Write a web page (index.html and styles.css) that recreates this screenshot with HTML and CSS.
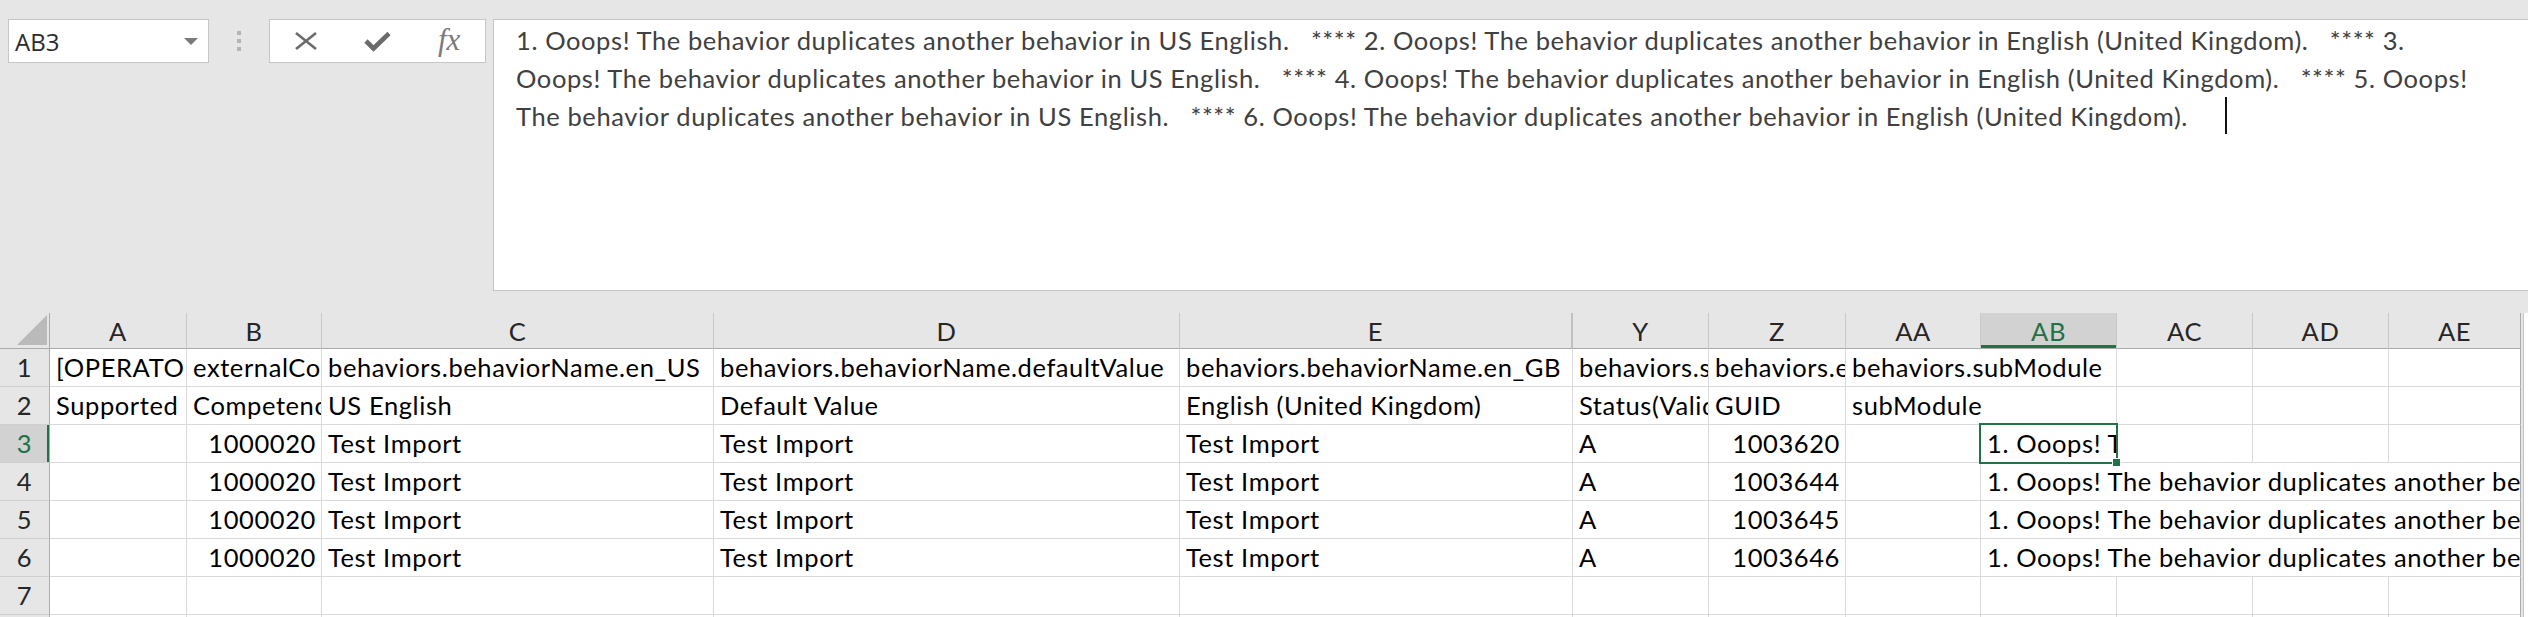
FILE: index.html
```html
<!DOCTYPE html>
<html lang="en">
<head>
  <meta charset="UTF-8">
  <title>Book1 - Excel</title>
  <link rel="stylesheet" href="styles.css">
</head>
<body>
  <div class="topbar">
    <div class="name-box">
      <span class="name-ref">AB3</span>
      <span class="name-caret"></span>
    </div>
    <div class="grip"><i></i><i></i><i></i></div>
    <div class="fx-buttons">
      <span class="fx-btn">
        <svg width="24" height="20" viewBox="0 0 24 20"><path d="M2 2 L22 18 M22 2 L2 18" stroke="#6b6b6b" stroke-width="2.6" fill="none"/></svg>
      </span>
      <span class="fx-btn">
        <svg width="27" height="21" viewBox="0 0 27 21"><path d="M2 10 L9.5 17.5 L25 2.5" stroke="#6b6b6b" stroke-width="4.6" fill="none"/></svg>
      </span>
      <span class="fx-btn"><span class="fx">fx</span></span>
    </div>
    <div class="formula">
      <div class="formula-line">1. Ooops! The behavior duplicates another behavior in US English.   **** 2. Ooops! The behavior duplicates another behavior in English (United Kingdom).   **** 3.</div>
      <div class="formula-line">Ooops! The behavior duplicates another behavior in US English.   **** 4. Ooops! The behavior duplicates another behavior in English (United Kingdom).   **** 5. Ooops!</div>
      <div class="formula-line">The behavior duplicates another behavior in US English.   **** 6. Ooops! The behavior duplicates another behavior in English (United Kingdom).   <span class="caret"></span></div>
    </div>
  </div>

  <div class="sheet-wrap">
    <div class="sheet">
      <!-- column headers -->
      <div class="corner"><svg width="30" height="30" viewBox="0 0 30 30"><polygon points="30,0 30,30 0,30" fill="#bababa"/></svg></div>
      <div class="ch">A</div>
      <div class="ch">B</div>
      <div class="ch">C</div>
      <div class="ch">D</div>
      <div class="ch hidden-before-next">E</div>
      <div class="ch">Y</div>
      <div class="ch">Z</div>
      <div class="ch">AA</div>
      <div class="ch sel">AB</div>
      <div class="ch">AC</div>
      <div class="ch">AD</div>
      <div class="ch last">AE</div>

      <!-- row 1 -->
      <div class="rh">1</div>
      <div class="c">[OPERATOR]</div>
      <div class="c">externalCode</div>
      <div class="c">behaviors.behaviorName.en_US</div>
      <div class="c">behaviors.behaviorName.defaultValue</div>
      <div class="c">behaviors.behaviorName.en_GB</div>
      <div class="c">behaviors.status</div>
      <div class="c">behaviors.externalCode</div>
      <div class="c span2">behaviors.subModule</div>
      <div class="c"></div>
      <div class="c"></div>
      <div class="c last"></div>

      <!-- row 2 -->
      <div class="rh">2</div>
      <div class="c">Supported operators</div>
      <div class="c">Competency</div>
      <div class="c">US English</div>
      <div class="c">Default Value</div>
      <div class="c">English (United Kingdom)</div>
      <div class="c">Status(Valid Values : A/I)</div>
      <div class="c">GUID</div>
      <div class="c span2">subModule</div>
      <div class="c"></div>
      <div class="c"></div>
      <div class="c last"></div>

      <!-- row 3 -->
      <div class="rh sel">3</div>
      <div class="c"></div>
      <div class="c num">1000020</div>
      <div class="c">Test Import</div>
      <div class="c">Test Import</div>
      <div class="c">Test Import</div>
      <div class="c">A</div>
      <div class="c num">1003620</div>
      <div class="c"></div>
      <div class="c active"><span class="clip">1. Ooops! The behavior duplicates another behavior in US English.</span></div>
      <div class="c"></div>
      <div class="c"></div>
      <div class="c last"></div>

      <!-- row 4 -->
      <div class="rh">4</div>
      <div class="c"></div>
      <div class="c num">1000020</div>
      <div class="c">Test Import</div>
      <div class="c">Test Import</div>
      <div class="c">Test Import</div>
      <div class="c">A</div>
      <div class="c num">1003644</div>
      <div class="c"></div>
      <div class="c span4 last">1. Ooops! The behavior duplicates another behavior in US English.   **** 2. Ooops! The behavior duplicates another behavior in English (United Kingdom).</div>

      <!-- row 5 -->
      <div class="rh">5</div>
      <div class="c"></div>
      <div class="c num">1000020</div>
      <div class="c">Test Import</div>
      <div class="c">Test Import</div>
      <div class="c">Test Import</div>
      <div class="c">A</div>
      <div class="c num">1003645</div>
      <div class="c"></div>
      <div class="c span4 last">1. Ooops! The behavior duplicates another behavior in US English.   **** 2. Ooops! The behavior duplicates another behavior in English (United Kingdom).</div>

      <!-- row 6 -->
      <div class="rh">6</div>
      <div class="c"></div>
      <div class="c num">1000020</div>
      <div class="c">Test Import</div>
      <div class="c">Test Import</div>
      <div class="c">Test Import</div>
      <div class="c">A</div>
      <div class="c num">1003646</div>
      <div class="c"></div>
      <div class="c span4 last">1. Ooops! The behavior duplicates another behavior in US English.   **** 2. Ooops! The behavior duplicates another behavior in English (United Kingdom).</div>

      <!-- row 7 -->
      <div class="rh">7</div>
      <div class="c"></div><div class="c"></div><div class="c"></div><div class="c"></div>
      <div class="c"></div><div class="c"></div><div class="c"></div><div class="c"></div>
      <div class="c"></div><div class="c"></div><div class="c"></div><div class="c last"></div>

      <!-- row 8 -->
      <div class="rh">8</div>
      <div class="c"></div><div class="c"></div><div class="c"></div><div class="c"></div>
      <div class="c"></div><div class="c"></div><div class="c"></div><div class="c"></div>
      <div class="c"></div><div class="c"></div><div class="c"></div><div class="c last"></div>
    </div>
    <div class="vscroll"></div>
  </div>
</body>
</html>
```

FILE: styles.css
```css
body {
  margin: 0;
  width: 2528px;
  height: 617px;
  overflow: hidden;
  background: #e6e6e6;
  font-family: Lato, "Liberation Sans", sans-serif;
  font-size: 25.5px;
  letter-spacing: 0.6px;
}

/* barra de formulas */
.topbar {
  display: flex;
  align-items: flex-start;
  height: 313px;
  padding-top: 19px;
  box-sizing: border-box;
}

.name-box {
  margin-left: 8px;
  width: 201px;
  height: 44px;
  box-sizing: border-box;
  border: 1px solid #c6c6c6;
  background: #fff;
  display: flex;
  align-items: center;
  justify-content: space-between;
  padding: 0 10px 0 6px;
}

.name-ref {
  font-family: "Open Sans", sans-serif;
  font-size: 24px;
  letter-spacing: 0;
  color: #2b2b2b;
}

.name-caret {
  width: 0;
  height: 0;
  border-left: 7px solid transparent;
  border-right: 7px solid transparent;
  border-top: 7px solid #7a7a7a;
}

.grip {
  width: 60px;
  height: 44px;
  display: flex;
  flex-direction: column;
  align-items: center;
  justify-content: center;
  gap: 4px;
}

.grip i {
  display: block;
  width: 4px;
  height: 4px;
  background: #b4b4b4;
}

.fx-buttons {
  width: 217px;
  height: 44px;
  box-sizing: border-box;
  border: 1px solid #c6c6c6;
  background: #fff;
  display: flex;
}

.fx-btn {
  width: 72px;
  display: flex;
  align-items: center;
  justify-content: center;
}

.fx {
  font-family: "Liberation Serif", serif;
  font-style: italic;
  font-size: 31px;
  letter-spacing: 0;
  color: #7a7a7a;
  margin-top: -3px;
}

.formula {
  flex: 1;
  margin-left: 7px;
  height: 272px;
  box-sizing: border-box;
  border: 1px solid #c6c6c6;
  border-right: none;
  background: #fff;
  padding: 1px 0 0 22px;
  color: #404040;
  line-height: 38px;
}

.formula-line {
  white-space: pre;
}

.caret {
  display: inline-block;
  width: 2px;
  height: 37px;
  margin-left: 16px;
  background: #111;
  vertical-align: top;
}

/* hoja */
.sheet-wrap {
  display: flex;
}

.sheet {
  display: grid;
  grid-template-columns: 50px 137px 135px 392px 466px 393px 136px 137px 135px 136px 136px 136px 132px;
  grid-template-rows: 36px repeat(8, 38px);
}

.corner {
  background: #e6e6e6;
  border-right: 1px solid #ababab;
  border-bottom: 1px solid #ababab;
  display: flex;
  align-items: flex-end;
  justify-content: flex-end;
  padding: 0 2px 3px 0;
}

.ch {
  background: #e6e6e6;
  border-right: 1px solid #c9c9c9;
  border-bottom: 1px solid #ababab;
  text-align: center;
  line-height: 37px;
  color: #262626;
}

.ch.hidden-before-next {
  border-right: 2px solid #c0c0c0;
}

.ch.sel {
  background: #d2d2d2;
  color: #217346;
  box-shadow: inset 0 -3px 0 #217346;
}

.ch.last,
.c.last {
  border-right-color: #ababab;
}

.rh {
  background: #e6e6e6;
  border-right: 1px solid #ababab;
  border-bottom: 1px solid #cfcfcf;
  text-align: center;
  line-height: 37px;
  color: #262626;
}

.rh.sel {
  background: #d2d2d2;
  color: #217346;
  box-shadow: inset -2px 0 0 #217346;
}

.c {
  background: #fff;
  border-right: 1px solid #dadada;
  border-bottom: 1px solid #dadada;
  padding: 0 6px;
  white-space: pre;
  overflow: hidden;
  line-height: 37px;
  color: #000;
}

.c.num {
  text-align: right;
  padding-right: 5px;
}

.span2 {
  grid-column: span 2;
}

.span4 {
  grid-column: span 4;
}

.c.active {
  position: relative;
  overflow: visible;
  padding-right: 0;
}

.c.active .clip {
  display: block;
  overflow: hidden;
}

.c.active::after {
  content: '';
  position: absolute;
  top: -2px;
  left: -2px;
  right: -2px;
  bottom: -2px;
  border: 2px solid #217346;
}

.c.active::before {
  content: '';
  position: absolute;
  right: -5px;
  bottom: -5px;
  width: 7px;
  height: 7px;
  background: #217346;
  border: 1px solid #fff;
  z-index: 2;
}

.vscroll {
  width: 20px;
  height: 340px;
  border-left: 2px solid #e6e6e6;
  box-sizing: border-box;
  background: #fff;
  box-shadow: inset 1px 0 0 #c6c6c6;
}
```
